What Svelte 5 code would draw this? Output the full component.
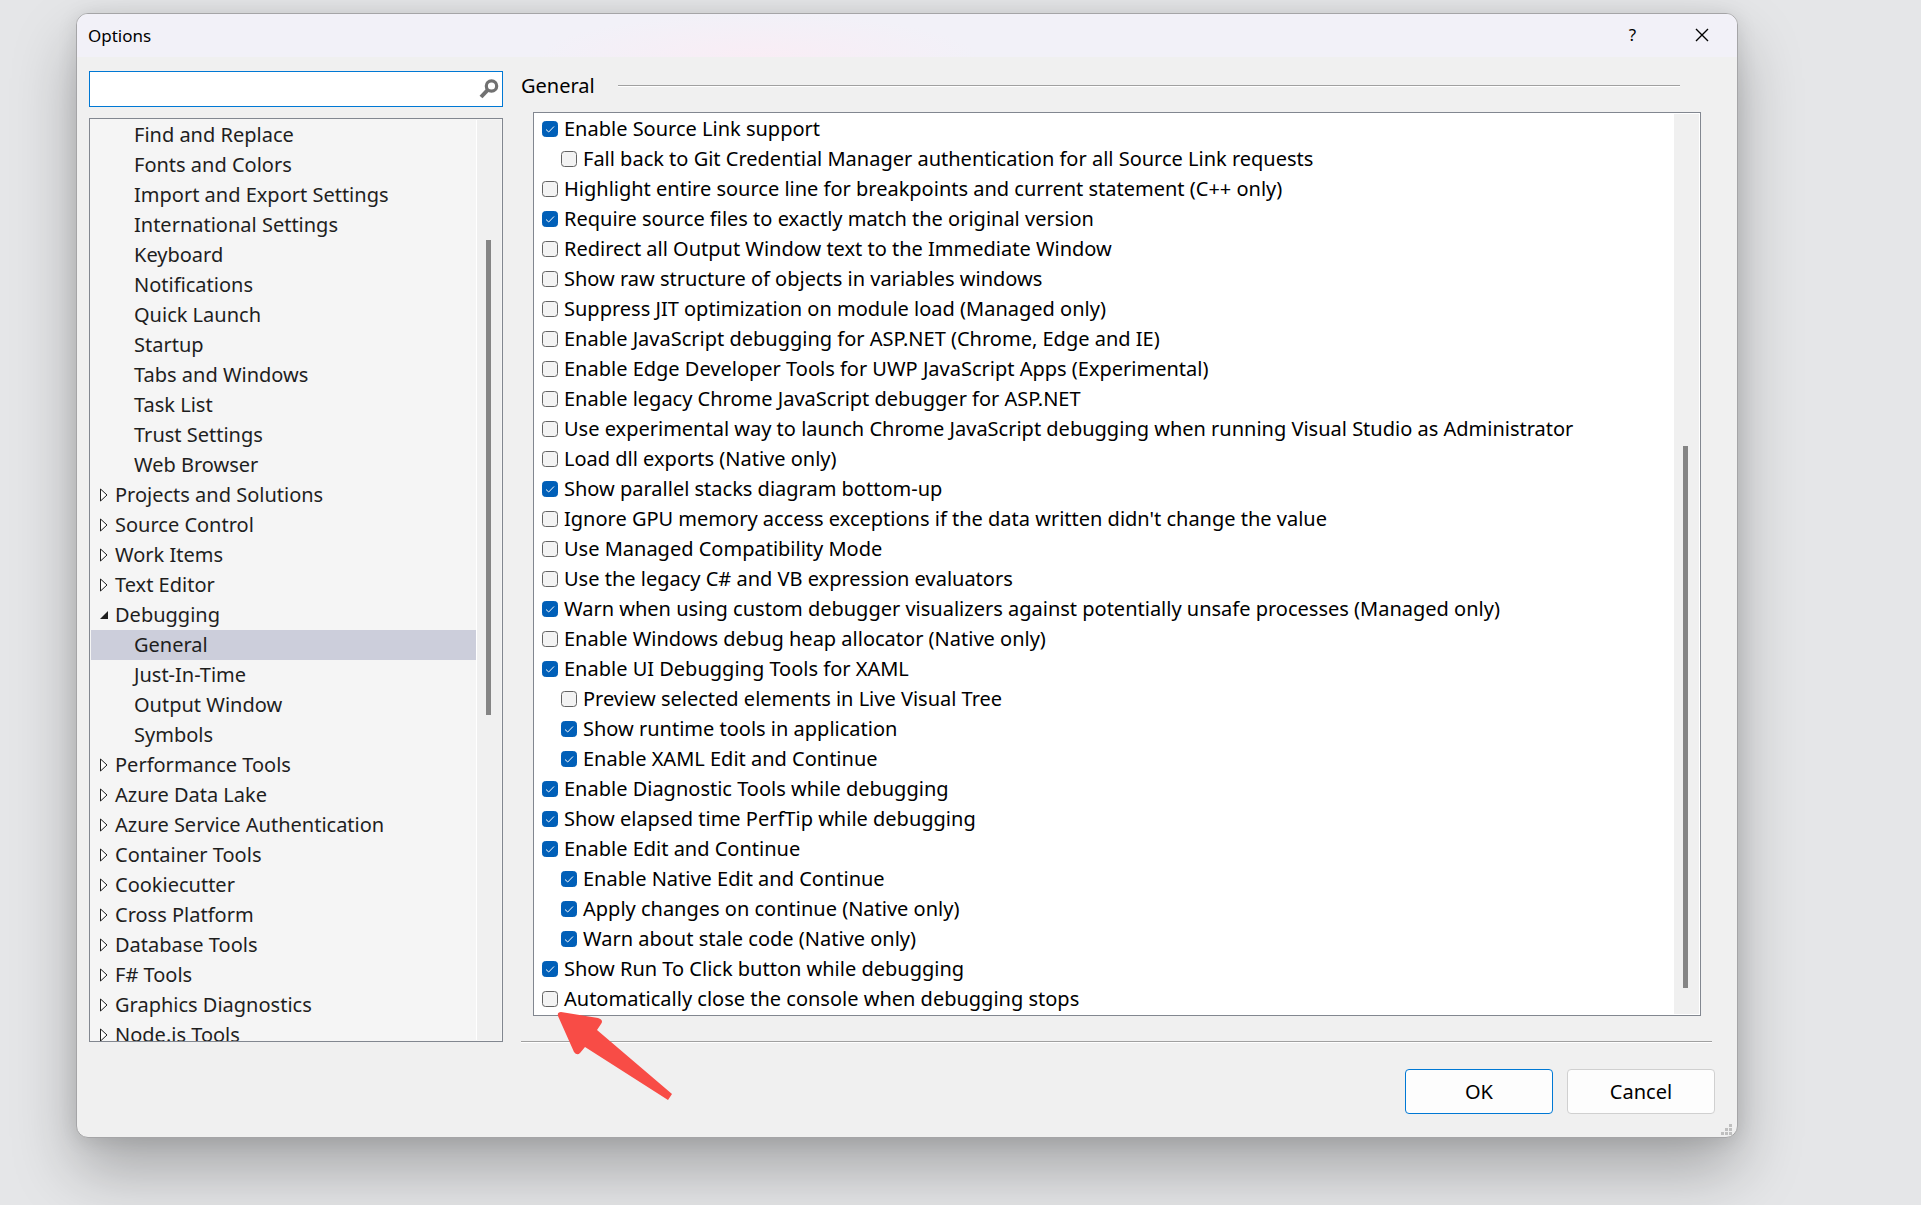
<script lang="ts">
  type TreeItem = { label: string; kind: 'child' | 'closed' | 'open'; selected?: boolean };
  type Option = { label: string; checked: boolean; nested?: boolean };

  let search = $state('');

  const tree: TreeItem[] = [
    { label: 'Find and Replace', kind: 'child' },
    { label: 'Fonts and Colors', kind: 'child' },
    { label: 'Import and Export Settings', kind: 'child' },
    { label: 'International Settings', kind: 'child' },
    { label: 'Keyboard', kind: 'child' },
    { label: 'Notifications', kind: 'child' },
    { label: 'Quick Launch', kind: 'child' },
    { label: 'Startup', kind: 'child' },
    { label: 'Tabs and Windows', kind: 'child' },
    { label: 'Task List', kind: 'child' },
    { label: 'Trust Settings', kind: 'child' },
    { label: 'Web Browser', kind: 'child' },
    { label: 'Projects and Solutions', kind: 'closed' },
    { label: 'Source Control', kind: 'closed' },
    { label: 'Work Items', kind: 'closed' },
    { label: 'Text Editor', kind: 'closed' },
    { label: 'Debugging', kind: 'open' },
    { label: 'General', kind: 'child', selected: true },
    { label: 'Just-In-Time', kind: 'child' },
    { label: 'Output Window', kind: 'child' },
    { label: 'Symbols', kind: 'child' },
    { label: 'Performance Tools', kind: 'closed' },
    { label: 'Azure Data Lake', kind: 'closed' },
    { label: 'Azure Service Authentication', kind: 'closed' },
    { label: 'Container Tools', kind: 'closed' },
    { label: 'Cookiecutter', kind: 'closed' },
    { label: 'Cross Platform', kind: 'closed' },
    { label: 'Database Tools', kind: 'closed' },
    { label: 'F# Tools', kind: 'closed' },
    { label: 'Graphics Diagnostics', kind: 'closed' },
    { label: 'Node.js Tools', kind: 'closed' }
  ];

  const options: Option[] = $state([
    { label: 'Enable Source Link support', checked: true },
    { label: 'Fall back to Git Credential Manager authentication for all Source Link requests', checked: false, nested: true },
    { label: 'Highlight entire source line for breakpoints and current statement (C++ only)', checked: false },
    { label: 'Require source files to exactly match the original version', checked: true },
    { label: 'Redirect all Output Window text to the Immediate Window', checked: false },
    { label: 'Show raw structure of objects in variables windows', checked: false },
    { label: 'Suppress JIT optimization on module load (Managed only)', checked: false },
    { label: 'Enable JavaScript debugging for ASP.NET (Chrome, Edge and IE)', checked: false },
    { label: 'Enable Edge Developer Tools for UWP JavaScript Apps (Experimental)', checked: false },
    { label: 'Enable legacy Chrome JavaScript debugger for ASP.NET', checked: false },
    { label: 'Use experimental way to launch Chrome JavaScript debugging when running Visual Studio as Administrator', checked: false },
    { label: 'Load dll exports (Native only)', checked: false },
    { label: 'Show parallel stacks diagram bottom-up', checked: true },
    { label: "Ignore GPU memory access exceptions if the data written didn't change the value", checked: false },
    { label: 'Use Managed Compatibility Mode', checked: false },
    { label: 'Use the legacy C# and VB expression evaluators', checked: false },
    { label: 'Warn when using custom debugger visualizers against potentially unsafe processes (Managed only)', checked: true },
    { label: 'Enable Windows debug heap allocator (Native only)', checked: false },
    { label: 'Enable UI Debugging Tools for XAML', checked: true },
    { label: 'Preview selected elements in Live Visual Tree', checked: false, nested: true },
    { label: 'Show runtime tools in application', checked: true, nested: true },
    { label: 'Enable XAML Edit and Continue', checked: true, nested: true },
    { label: 'Enable Diagnostic Tools while debugging', checked: true },
    { label: 'Show elapsed time PerfTip while debugging', checked: true },
    { label: 'Enable Edit and Continue', checked: true },
    { label: 'Enable Native Edit and Continue', checked: true, nested: true },
    { label: 'Apply changes on continue (Native only)', checked: true, nested: true },
    { label: 'Warn about stale code (Native only)', checked: true, nested: true },
    { label: 'Show Run To Click button while debugging', checked: true },
    { label: 'Automatically close the console when debugging stops', checked: false }
  ]);
</script>

<main class="desktop">
  <section class="dialog" role="dialog" aria-labelledby="dialog-title">
    <header class="titlebar">
      <h1 id="dialog-title">Options</h1>
      <button class="caption-btn" aria-label="Help">?</button>
      <button class="caption-btn" aria-label="Close">
        <svg width="14" height="14" viewBox="0 0 14 14">
          <path d="M1 1 13 13M13 1 1 13" stroke="#000" stroke-width="1.4" fill="none" />
        </svg>
      </button>
    </header>

    <div class="body">
      <div class="sidebar">
        <div class="search">
          <input type="text" aria-label="Search options" bind:value={search} />
          <svg width="20" height="20" viewBox="0 0 20 20">
            <circle cx="12.5" cy="7" r="5.2" fill="none" stroke="#717171" stroke-width="3.2" />
            <path d="M8.8 10.8 2 18" stroke="#717171" stroke-width="4" />
          </svg>
        </div>

        <div class="tree">
          <ul>
            {#each tree as item}
              <li class={item.kind} class:selected={item.selected}>
                {#if item.kind === 'closed'}
                  <svg width="8" height="14" viewBox="0 0 8 14">
                    <path d="M.5 1v12L7 7z" fill="#fff" stroke="#1e1e1e" />
                  </svg>
                {:else if item.kind === 'open'}
                  <svg width="8" height="14" viewBox="0 0 8 14">
                    <path d="M8 3v8H0z" fill="#1e1e1e" />
                  </svg>
                {/if}
                <span>{item.label}</span>
              </li>
            {/each}
          </ul>
          <div class="scrollbar tree-scroll"><div class="thumb"></div></div>
        </div>
      </div>

      <div class="content">
        <h2>General</h2>
        <div class="panel">
          <div class="options">
            {#each options as option}
              <label class:nested={option.nested}>
                <input type="checkbox" bind:checked={option.checked} />
                <svg class="box" width="16" height="16" viewBox="0 0 16 16">
                  <rect x=".5" y=".5" width="15" height="15" rx="3" />
                  <path d="M4 8.5 6.7 11 12 5.5" />
                </svg>
                <span>{option.label}</span>
              </label>
            {/each}
          </div>
          <div class="scrollbar options-scroll"><div class="thumb"></div></div>
          <svg class="arrow" width="116" height="90" viewBox="0 0 116 90">
            <path
              d="M4 1 41 7Q47 9 44 13L40 19 115 83 111 89 28 36 23 42Q20 45 17 41L1 5Q0 1 4 1z"
              fill="#f84c46"
            />
          </svg>
        </div>
        <hr />
      </div>
    </div>

    <footer>
      <button class="btn primary">OK</button>
      <button class="btn">Cancel</button>
    </footer>
    <svg class="grip" width="11" height="11" viewBox="0 0 11 11">
      <path d="M8 0h3v3H8zM4 4h3v3H4zM8 4h3v3H8zM0 8h3v3H0zM4 8h3v3H4zM8 8h3v3H8z" fill="#bfbfbf" />
    </svg>
  </section>
</main>

<style>
  :global(body) {
    margin: 0;
    background: #e5e6e8;
  }

  .desktop {
    box-sizing: border-box;
    min-height: 100vh;
    padding: 13px 183px 66px 76px;
    overflow: hidden;
    font-family: 'Noto Sans', 'Open Sans', sans-serif;
    font-size: 20px;
    color: #000;
  }

  .dialog {
    position: relative;
    border: 1px solid #a5a5a7;
    border-radius: 12px;
    background: #f0f0f0;
    box-shadow:
      0 32px 64px rgba(0, 0, 0, 0.28),
      0 2px 20px rgba(0, 0, 0, 0.1);
  }

  .titlebar {
    display: flex;
    align-items: center;
    height: 43px;
    padding-left: 11px;
    border-radius: 11px 11px 0 0;
    background: radial-gradient(ellipse 220px 43px at 41% 100%, #f9edf5, #f2f1f8);
  }

  h1 {
    flex: 1;
    margin: 0;
    font-size: 17px;
    font-weight: 400;
  }

  .caption-btn {
    display: flex;
    align-items: center;
    justify-content: center;
    width: 69px;
    height: 43px;
    padding: 0 2px 2px 0;
    border: none;
    background: none;
    font-family: inherit;
    font-size: 17px;
    color: #000;
  }

  .body {
    display: flex;
    gap: 18px;
    padding: 14px 21px 0 12px;
  }

  .sidebar {
    display: flex;
    flex: 0 0 414px;
    flex-direction: column;
    gap: 11px;
  }

  .search {
    display: flex;
    align-items: center;
    box-sizing: border-box;
    height: 36px;
    padding-right: 3px;
    border: 1px solid #0078d4;
    background: #fff;
  }

  .search input {
    flex: 1;
    min-width: 0;
    height: 30px;
    border: none;
    outline: none;
    background: transparent;
    font: inherit;
  }

  /* takes its height from the options column, extra rows are cut off */
  .tree {
    display: flex;
    flex: 1;
    contain: size;
    padding: 1px;
    border: 1px solid #828790;
    background: #f5f5f5;
    overflow: hidden;
  }

  ul {
    flex: 1;
    margin: 0;
    padding: 0;
    list-style: none;
    color: #1e1e1e;
  }

  li {
    display: flex;
    align-items: center;
    gap: 7px;
    height: 30px;
    padding-left: 9px;
    line-height: 30px;
    white-space: nowrap;
  }

  li.child {
    padding-left: 43px;
  }

  li.selected {
    background: #cccedb;
  }

  .scrollbar {
    display: flex;
    flex-direction: column;
    align-items: center;
    box-sizing: border-box;
    flex: 0 0 25px;
    padding-right: 2px;
    background: #f0f0f0;
  }

  .thumb {
    width: 5px;
    background: #858585;
  }

  .tree-scroll {
    border-left: 1px solid #fff;
    padding-top: 120px;
  }

  .tree-scroll .thumb {
    height: 475px;
  }

  .options-scroll {
    padding-top: 332px;
  }

  .options-scroll .thumb {
    height: 542px;
  }

  .content {
    flex: 1;
    min-width: 0;
  }

  h2 {
    display: flex;
    align-items: center;
    gap: 23px;
    height: 28px;
    margin: 0 36px 13px 0;
    font-size: 20px;
    font-weight: 400;
  }

  h2::after {
    content: '';
    flex: 1;
    height: 1px;
    background: #a0a0a0;
    box-shadow: 0 1px #fff;
  }

  .panel {
    position: relative;
    display: flex;
    margin: 0 15px 0 12px;
    padding: 1px;
    border: 1px solid #828790;
    background: #fff;
  }

  .options {
    flex: 1;
    min-width: 0;
  }

  label {
    display: flex;
    align-items: center;
    gap: 6px;
    height: 30px;
    padding-left: 7px;
    line-height: 30px;
    white-space: nowrap;
  }

  label.nested {
    padding-left: 26px;
  }

  label input {
    position: absolute;
    opacity: 0;
  }

  .box {
    flex: none;
  }

  .box rect {
    fill: #f3f3f3;
    stroke: #626262;
  }

  .box path {
    display: none;
    fill: none;
    stroke: #fff;
  }

  input:checked + .box rect {
    fill: #005fb8;
    stroke: #005fb8;
  }

  input:checked + .box path {
    display: block;
  }

  .arrow {
    position: absolute;
    top: 898px;
    left: 23px;
    z-index: 1;
  }

  hr {
    height: 1px;
    margin: 25px 4px 0 0;
    border: none;
    background: #a0a0a0;
    box-shadow: 0 1px #fff;
  }

  footer {
    display: flex;
    justify-content: flex-end;
    gap: 14px;
    padding: 27px 22px 23px;
  }

  .btn {
    box-sizing: border-box;
    width: 148px;
    height: 45px;
    padding: 0;
    border: 1px solid #d0d0d0;
    border-radius: 4px;
    background: #fdfdfd;
    font: inherit;
    color: #000;
  }

  .btn.primary {
    border-color: #0078d4;
  }

  .grip {
    position: absolute;
    right: 5px;
    bottom: 2px;
  }
</style>
